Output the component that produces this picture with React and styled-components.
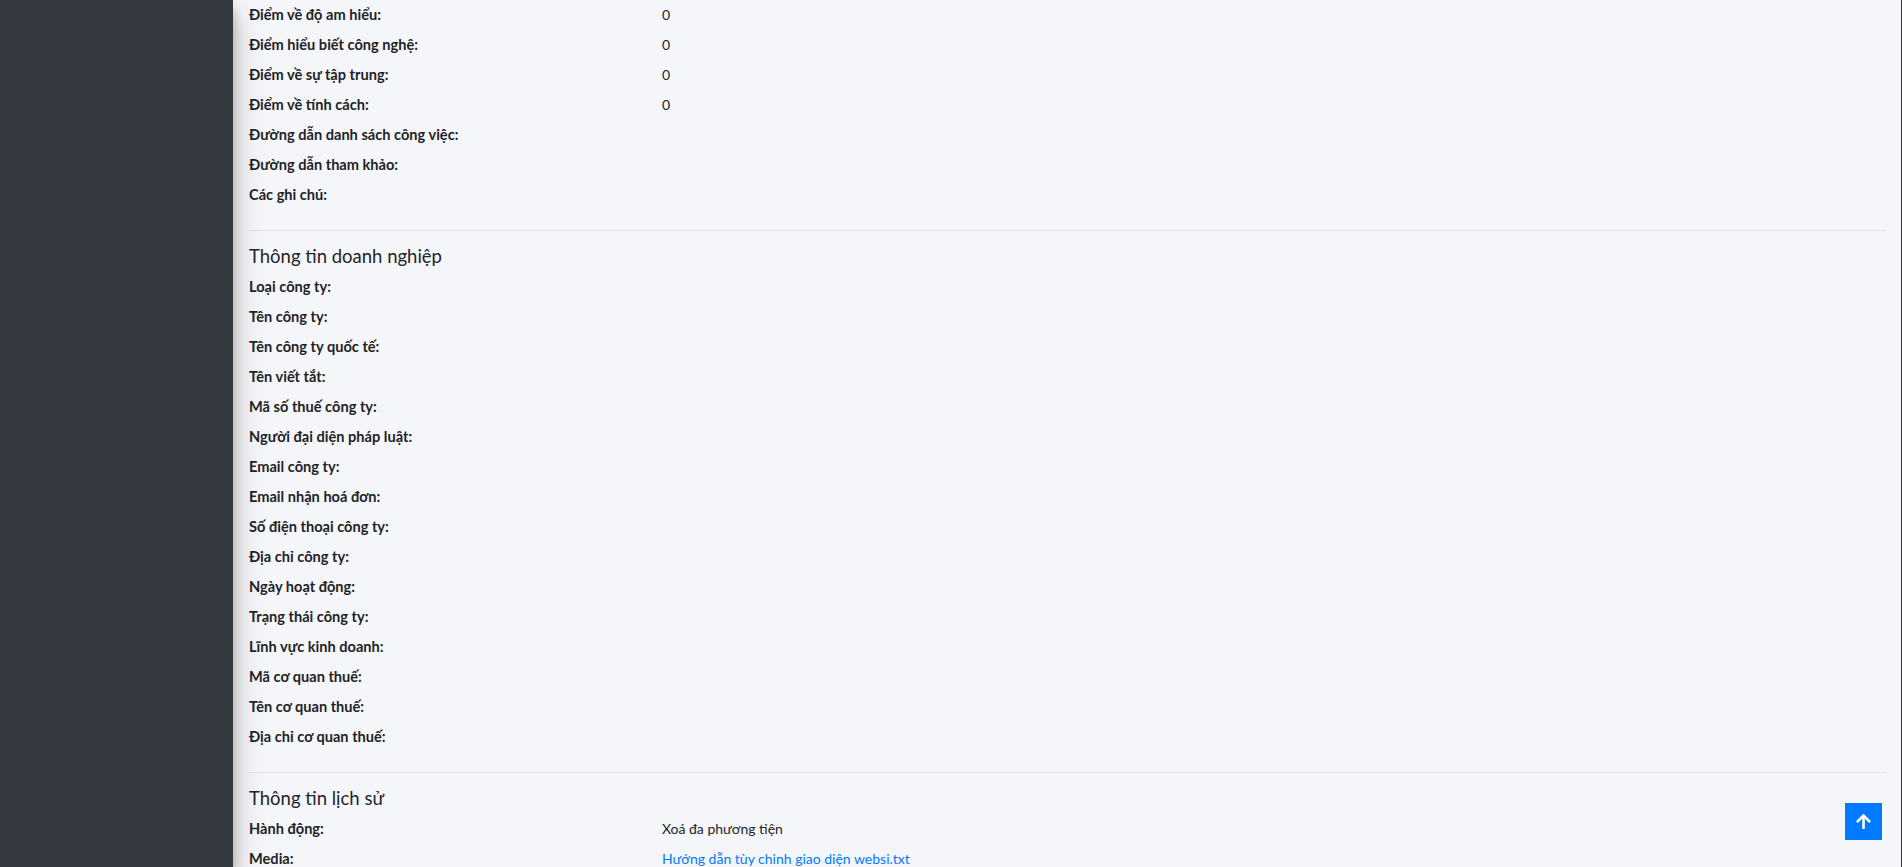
import React from "react";
import styled, { createGlobalStyle } from "styled-components";
import { FaArrowUp } from "react-icons/fa";

const GlobalStyle = createGlobalStyle`
  html, body {
    margin: 0;
    padding: 0;
    height: 100%;
    overflow: hidden;
  }
  body {
    font-family: "Lato", "Open Sans", sans-serif;
    color: #212529;
    background-color: #f4f6f9;
  }
`;

const Layout = styled.div`
  display: flex;
  height: 100vh;
  border-right: 1px solid #343a40;
  box-sizing: border-box;
`;

const Sidebar = styled.aside`
  flex: 0 0 233px;
  background-color: #343a40;
  box-shadow: 0 14px 28px rgba(0, 0, 0, 0.25), 0 10px 10px rgba(0, 0, 0, 0.22);
  z-index: 2;
`;

const Content = styled.main`
  flex: 1;
  padding: 0 15px 0 16px;
  background-color: #f4f6f9;
  overflow: hidden;
`;

const Section = styled.section`
  padding-bottom: 20px;
  border-bottom: ${(p) => (p.last ? "none" : "1px solid #dee2e6")};
`;

const SectionTitle = styled.h5`
  margin: 13px 0 4px;
  font-size: 18.5px;
  font-weight: 400;
  line-height: 24px;
  color: #212529;
`;

const DetailList = styled.dl`
  display: grid;
  grid-template-columns: 413px 1fr;
  margin: 0;
`;

const Term = styled.dt`
  font-size: 14.6px;
  font-weight: 700;
  line-height: 30px;
  height: 30px;
  color: #1f2326;
`;

const Detail = styled.dd`
  margin: 0;
  font-size: 14px;
  line-height: 30px;
  height: 30px;
`;

const Link = styled.a`
  color: #007bff;
  text-decoration: none;
`;

const BackToTop = styled.button`
  position: fixed;
  right: 20px;
  bottom: 27px;
  width: 37px;
  height: 37px;
  display: flex;
  align-items: center;
  justify-content: center;
  padding: 0;
  border: none;
  background-color: #007bff;
  color: #ffffff;
  cursor: pointer;
`;

const scores = [
  ["Điểm về độ am hiểu:", "0"],
  ["Điểm hiểu biết công nghệ:", "0"],
  ["Điểm về sự tập trung:", "0"],
  ["Điểm về tính cách:", "0"],
  ["Đường dẫn danh sách công việc:", ""],
  ["Đường dẫn tham khảo:", ""],
  ["Các ghi chú:", ""],
];

const company = [
  "Loại công ty:",
  "Tên công ty:",
  "Tên công ty quốc tế:",
  "Tên viết tắt:",
  "Mã số thuế công ty:",
  "Người đại diện pháp luật:",
  "Email công ty:",
  "Email nhận hoá đơn:",
  "Số điện thoại công ty:",
  "Địa chỉ công ty:",
  "Ngày hoạt động:",
  "Trạng thái công ty:",
  "Lĩnh vực kinh doanh:",
  "Mã cơ quan thuế:",
  "Tên cơ quan thuế:",
  "Địa chỉ cơ quan thuế:",
];

function Rows({ items }) {
  return (
    <DetailList>
      {items.map(([label, value]) => (
        <React.Fragment key={label}>
          <Term>{label}</Term>
          <Detail>{value}</Detail>
        </React.Fragment>
      ))}
    </DetailList>
  );
}

export default function App() {
  return (
    <>
      <GlobalStyle />
      <Layout>
        <Sidebar />
        <Content>
          <Section>
            <Rows items={scores} />
          </Section>

          <Section>
            <SectionTitle>Thông tin doanh nghiệp</SectionTitle>
            <Rows items={company.map((label) => [label, ""])} />
          </Section>

          <Section last>
            <SectionTitle>Thông tin lịch sử</SectionTitle>
            <DetailList>
              <Term>Hành động:</Term>
              <Detail>Xoá đa phương tiện</Detail>
              <Term>Media:</Term>
              <Detail>
                <Link href="#">Hướng dẫn tùy chinh giao diện websi.txt</Link>
              </Detail>
            </DetailList>
          </Section>
        </Content>
      </Layout>
      <BackToTop aria-label="Back to top">
        <FaArrowUp size={17} />
      </BackToTop>
    </>
  );
}
